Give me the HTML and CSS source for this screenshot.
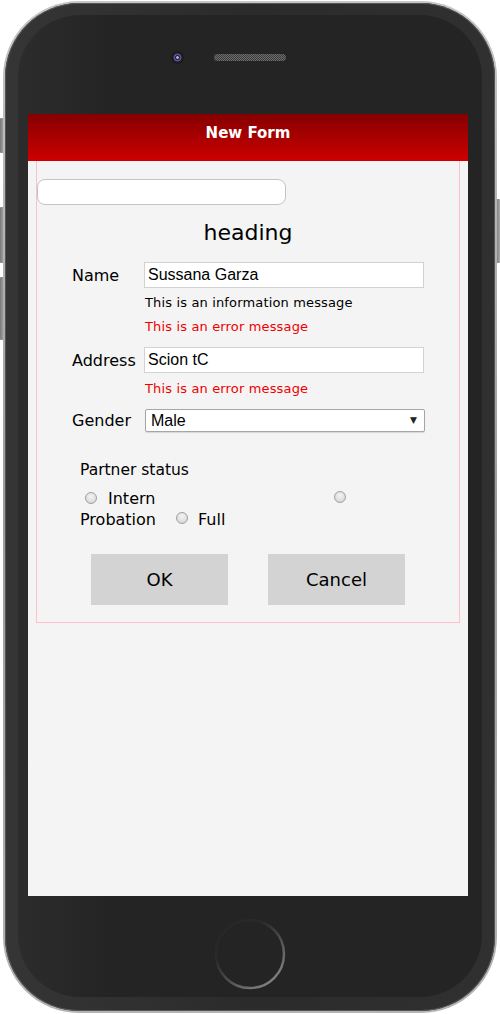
FILE: index.html
```html
<!DOCTYPE html>
<html lang="en">
<head>
<meta charset="utf-8">
<title>New Form</title>
<link rel="stylesheet" href="styles.css">
</head>
<body>
<div class="device">
  <span class="side-btn side-mute"></span>
  <span class="side-btn side-vol-up"></span>
  <span class="side-btn side-vol-down"></span>
  <span class="side-btn side-power"></span>
  <div class="phone">
    <div class="bezel">
      <div class="face">
        <div class="top-bar">
          <span class="camera"></span>
          <span class="speaker"></span>
        </div>
        <div class="screen">
          <div class="header">New Form</div>
          <div class="form">
            <div class="search-box"></div>
            <h1 class="heading">heading</h1>
            <div class="row">
              <span class="label">Name</span>
              <div class="text-input">Sussana Garza</div>
            </div>
            <div class="msg msg-info">This is an information message</div>
            <div class="msg msg-error">This is an error message</div>
            <div class="row row-address">
              <span class="label">Address</span>
              <div class="text-input">Scion tC</div>
            </div>
            <div class="msg msg-error msg-address">This is an error message</div>
            <div class="row row-gender">
              <span class="label">Gender</span>
              <div class="select"><span>Male</span><span class="arrow">&#9660;</span></div>
            </div>
            <div class="group-label">Partner status</div>
            <div class="radio-line">
              <span class="radio radio-first"></span>
              <span class="radio-text">Intern</span>
              <span class="radio radio-far"></span>
            </div>
            <div class="radio-line">
              <span class="radio-text">Probation</span>
              <span class="radio radio-mid"></span>
              <span class="radio-text radio-text-full">Full</span>
            </div>
            <div class="buttons">
              <div class="btn btn-ok">OK</div>
              <div class="btn btn-cancel">Cancel</div>
            </div>
          </div>
        </div>
        <div class="home">
          <svg width="72" height="72" viewBox="0 0 72 72">
            <defs>
              <linearGradient id="ring" x1="0.1" y1="0" x2="0.9" y2="1">
                <stop offset="0" stop-color="#262626"/>
                <stop offset="0.3" stop-color="#2a2a2a"/>
                <stop offset="0.55" stop-color="#4a4a4a"/>
                <stop offset="1" stop-color="#8e8e8e"/>
              </linearGradient>
            </defs>
            <circle cx="36" cy="36" r="34" fill="none" stroke="url(#ring)" stroke-width="2.4"/>
          </svg>
        </div>
      </div>
    </div>
  </div>
</div>
</body>
</html>
```
FILE: styles.css
```css
* { box-sizing: border-box; }
html, body {
  margin: 0;
  padding: 0;
  background: #ffffff;
  width: 500px;
  height: 1014px;
  overflow: hidden;
}
.device {
  position: relative;
  width: 500px;
  height: 1014px;
  padding: 1px 3px 1px 3px;
}
.side-btn {
  position: absolute;
  width: 4px;
  background: linear-gradient(90deg, #7a7a7a, #a8a8a8);
  border-radius: 1px;
}
.side-mute { left: 0; top: 118px; height: 35px; }
.side-vol-up { left: 0; top: 207px; height: 56px; }
.side-vol-down { left: 0; top: 277px; height: 63px; }
.side-power { left: 496px; top: 199px; height: 64px; }
.phone {
  position: relative;
  height: 1012px;
  border-radius: 76px;
  background: linear-gradient(180deg, #c6c6c6, #9c9c9c 50%, #b4b4b4);
  padding: 2px;
}
.bezel {
  height: 100%;
  border-radius: 74px;
  background: linear-gradient(90deg, #353535, #2b2b2b 50%, #303030);
  padding: 12px 13px 14px 13px;
  box-shadow: inset 0 0 0 1px #555;
}
.face {
  height: 100%;
  border-radius: 62px;
  background: linear-gradient(90deg, #2c2c2c, #242424 20%, #242424);
  display: flex;
  flex-direction: column;
  align-items: flex-start;
}
.top-bar {
  display: flex;
  align-items: center;
  padding-top: 36px;
  padding-left: 153px;
  height: 48px;
}
.camera {
  width: 13px;
  height: 13px;
  border-radius: 50%;
  background: radial-gradient(circle, #b9b0d8 0 1px, #2a2245 1.6px 2.2px, #5d4f9a 2.8px 3.6px, #1b1b1b 4.4px);
}
.speaker {
  margin-left: 30px;
  width: 72px;
  height: 7px;
  border-radius: 4px;
  background: repeating-conic-gradient(#6c6c6c 0 25%, #3c3c3c 0 50%) 0 0 / 2px 2px;
}
.screen {
  margin-top: 51px;
  margin-left: 10px;
  width: 440px;
  height: 782px;
  background: #f4f4f4;
  font-family: "DejaVu Sans", "Liberation Sans", sans-serif;
  color: #000;
  overflow: hidden;
}
.header {
  height: 47px;
  background: linear-gradient(180deg, #850000, #cd0000);
  color: #ffffff;
  font-weight: bold;
  font-size: 15px;
  line-height: 18px;
  padding-top: 10px;
  text-align: center;
}
.form {
  margin: 0 8px;
  border: 1px solid #ffc0cb;
  border-top: 0;
  padding: 18px 0 17px 0;
}
.search-box {
  width: 249px;
  height: 26px;
  border: 1px solid #c4c4c4;
  border-radius: 8px;
  background: #fff;
}
.heading {
  margin: 14px 0 0 0;
  font-size: 22px;
  font-weight: normal;
  line-height: 28px;
  text-align: center;
}
.row {
  display: flex;
  align-items: center;
  margin-top: 15px;
  margin-left: 35px;
  font-size: 16px;
}
.row-address { margin-top: 8px; }
.row-gender { margin-top: 8px; }
.label {
  width: 72px;
}
.text-input {
  width: 280px;
  height: 26px;
  border: 1px solid #d2d2d2;
  background: #fff;
  font-family: "Liberation Sans", Arial, sans-serif;
  font-size: 16px;
  line-height: 24px;
  padding-left: 3px;
}
.select {
  margin-left: 1px;
  width: 280px;
  height: 23px;
  border: 1px solid #a6a6a6;
  border-radius: 2px;
  background: #fff;
  box-shadow: 0 1px 1px rgba(0,0,0,0.12);
  font-family: "Liberation Sans", Arial, sans-serif;
  font-size: 16px;
  line-height: 21px;
  padding: 0 7px 0 5px;
  display: flex;
  justify-content: space-between;
  align-items: center;
}
.arrow {
  font-size: 9px;
  color: #222;
  font-family: "DejaVu Sans", sans-serif;
}
.msg {
  margin-left: 108px;
  font-size: 13px;
  letter-spacing: 0.15px;
  line-height: 24px;
}
.msg-info { margin-top: 3px; }
.msg-error { color: #f00000; }
.msg-address { margin-top: 4px; }
.group-label {
  margin-top: 28px;
  margin-left: 43px;
  font-size: 15.5px;
  line-height: 20px;
}
.radio-line {
  display: flex;
  align-items: center;
  margin-left: 43px;
  height: 20px;
  font-size: 16px;
}
.group-label + .radio-line { margin-top: 8px; }
.radio-line + .radio-line { margin-top: 1px; }
.radio {
  width: 12px;
  height: 12px;
  border-radius: 50%;
  border: 1px solid #a0a0a0;
  background: radial-gradient(circle at 50% 35%, #f4f4f4, #d0d0d0);
  flex: none;
}
.radio-first { margin-left: 5px; }
.radio-first + .radio-text { margin-left: 11px; }
.radio-far { margin-left: 179px; margin-top: -2px; }
.radio-mid { margin-left: 20px; margin-top: -2px; }
.radio-text-full { margin-left: 10px; }
.buttons {
  display: flex;
  justify-content: center;
  gap: 40px;
  margin-top: 25px;
}
.btn {
  width: 137px;
  height: 51px;
  background: #d3d3d3;
  font-size: 18px;
  display: flex;
  align-items: center;
  justify-content: center;
}
.home {
  align-self: center;
  margin-top: 22px;
  width: 72px;
  height: 72px;
}
.home svg { display: block; }
```
